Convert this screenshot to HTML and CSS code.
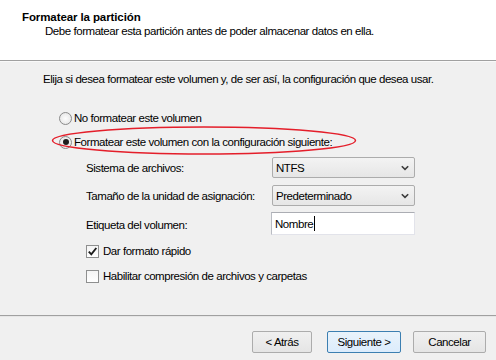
FILE: index.html
```html
<!DOCTYPE html>
<html lang="es">
<head>
<meta charset="utf-8">
<title>Formatear la partición</title>
<link rel="stylesheet" href="styles.css">
</head>
<body>
<div class="dialog">
  <header class="header">
    <div class="title">Formatear la partición</div>
    <div class="subtitle">Debe formatear esta partición antes de poder almacenar datos en ella.</div>
  </header>
  <main class="main">
    <p class="intro">Elija si desea formatear este volumen y, de ser así, la configuración que desea usar.</p>
    <div class="radio-row first"><span class="radio"></span><span>No formatear este volumen</span></div>
    <div class="radio-row"><span class="radio checked"></span><span>Formatear este volumen con la configuración siguiente:</span></div>
    <div class="fields">
      <div class="label">Sistema de archivos:</div>
      <div class="select"><span>NTFS</span><svg class="chev" width="8" height="6" viewBox="0 0 8 6"><path d="M0.8 1.2 L4 4.4 L7.2 1.2" fill="none" stroke="#3d3d3d" stroke-width="1.6"/></svg></div>
      <div class="label">Tamaño de la unidad de asignación:</div>
      <div class="select"><span>Predeterminado</span><svg class="chev" width="8" height="6" viewBox="0 0 8 6"><path d="M0.8 1.2 L4 4.4 L7.2 1.2" fill="none" stroke="#3d3d3d" stroke-width="1.6"/></svg></div>
      <div class="label">Etiqueta del volumen:</div>
      <div class="textbox"><span>Nombre</span><span class="caret"></span></div>
    </div>
    <div class="check-row first"><span class="checkbox"><svg width="11" height="11" viewBox="0 0 11 11"><path d="M1.8 5.6 L4.3 8.3 L9.3 2" fill="none" stroke="#1c1c1c" stroke-width="1.9"/></svg></span><span>Dar formato rápido</span></div>
    <div class="check-row"><span class="checkbox"></span><span>Habilitar compresión de archivos y carpetas</span></div>
  </main>
  <footer class="footer">
    <div class="btn back">&lt; Atrás</div>
    <div class="btn next">Siguiente &gt;</div>
    <div class="btn cancel">Cancelar</div>
  </footer>
  <svg class="highlight" width="310" height="32" viewBox="0 0 310 32"><ellipse cx="154" cy="15.5" rx="151.5" ry="13.5" fill="none" stroke="#e41e2a" stroke-width="1.5"/></svg>
</div>
</body>
</html>
```

FILE: styles.css
```css
html, body {
  margin: 0;
  padding: 0;
}
body {
  background: #f0f0f0;
  font-family: "Liberation Sans", Arial, sans-serif;
  font-size: 11.5px;
  letter-spacing: -0.45px;
  line-height: 14px;
  color: #000;
}
.dialog {
  position: relative;
  width: 496px;
  height: 360px;
  display: flex;
  flex-direction: column;
  overflow: hidden;
}
.header {
  box-sizing: border-box;
  height: 61px;
  padding: 10px 0 0 22px;
  background: #fff;
  border-bottom: 1px solid #a0a0a0;
  box-shadow: 0 1px 0 #f9f9f9;
}
.title {
  font-weight: bold;
  letter-spacing: -0.1px;
}
.subtitle {
  padding-left: 23px;
}
.main {
  flex: 1;
  padding-left: 43px;
}
.intro {
  margin: 11px 0 0 0;
}
.radio-row {
  display: flex;
  align-items: center;
  height: 14px;
  margin-left: 16px;
  margin-top: 10px;
}
.radio-row.first {
  margin-top: 25px;
}
.radio {
  box-sizing: border-box;
  width: 13px;
  height: 13px;
  border-radius: 50%;
  border: 1px solid #8a8a8a;
  background: radial-gradient(circle at 50% 50%, #fdfdfd 0%, #e9e9e9 70%, #dcdcdc 100%);
  margin-right: 2px;
  display: flex;
  align-items: center;
  justify-content: center;
}
.radio.checked::after {
  content: "";
  width: 6px;
  height: 6px;
  border-radius: 50%;
  background: #1e1e1e;
}
.fields {
  display: grid;
  grid-template-columns: 185px 144px;
  grid-template-rows: 21px 21px 23px;
  row-gap: 7px;
  margin: 8px 0 0 43px;
  align-items: center;
}
.label {
  white-space: nowrap;
}
.fields .textbox {
  margin-top: -2px;
}
.select {
  box-sizing: border-box;
  height: 21px;
  border: 1px solid #acacac;
  border-radius: 2px;
  background: linear-gradient(#f3f3f3, #e6e6e6);
  display: flex;
  align-items: center;
  justify-content: space-between;
  padding: 0 5px 0 3px;
  margin-left: 1px;
}
.textbox {
  box-sizing: border-box;
  height: 23px;
  background: #fff;
  border: 1px solid #e2e3ea;
  border-top-color: #abadb3;
  border-left-color: #b9bcc3;
  display: flex;
  align-items: center;
  padding-left: 3px;
}
.caret {
  width: 1px;
  height: 15px;
  background: #000;
  margin-left: 1px;
}
.check-row {
  display: flex;
  align-items: center;
  height: 14px;
  margin-left: 43px;
  margin-top: 11px;
}
.check-row.first {
  margin-top: 8px;
}
.checkbox {
  box-sizing: border-box;
  width: 13px;
  height: 13px;
  border: 1px solid #8e8f8f;
  background: linear-gradient(#f4f4f4, #ffffff);
  margin-right: 4px;
  display: flex;
  align-items: center;
  justify-content: center;
}
.footer {
  box-sizing: border-box;
  height: 45px;
  border-top: 1px solid #a0a0a0;
  box-shadow: inset 0 1px 0 #e6e6e6;
  display: flex;
  justify-content: flex-end;
  align-items: flex-start;
  padding: 15px 10px 0 0;
}
.btn {
  box-sizing: border-box;
  height: 22px;
  border: 1px solid #acacac;
  border-radius: 2px;
  background: linear-gradient(#f0f0f0, #e5e5e5);
  display: flex;
  align-items: center;
  justify-content: center;
}
.back {
  width: 60px;
  margin-right: 15px;
}
.next {
  width: 74px;
  margin-right: 12px;
  border-color: #3c7fb1;
  background: linear-gradient(#e9f3fb, #dcecfc);
}
.cancel {
  width: 73px;
}
.highlight {
  position: absolute;
  left: 50px;
  top: 125px;
}
```
